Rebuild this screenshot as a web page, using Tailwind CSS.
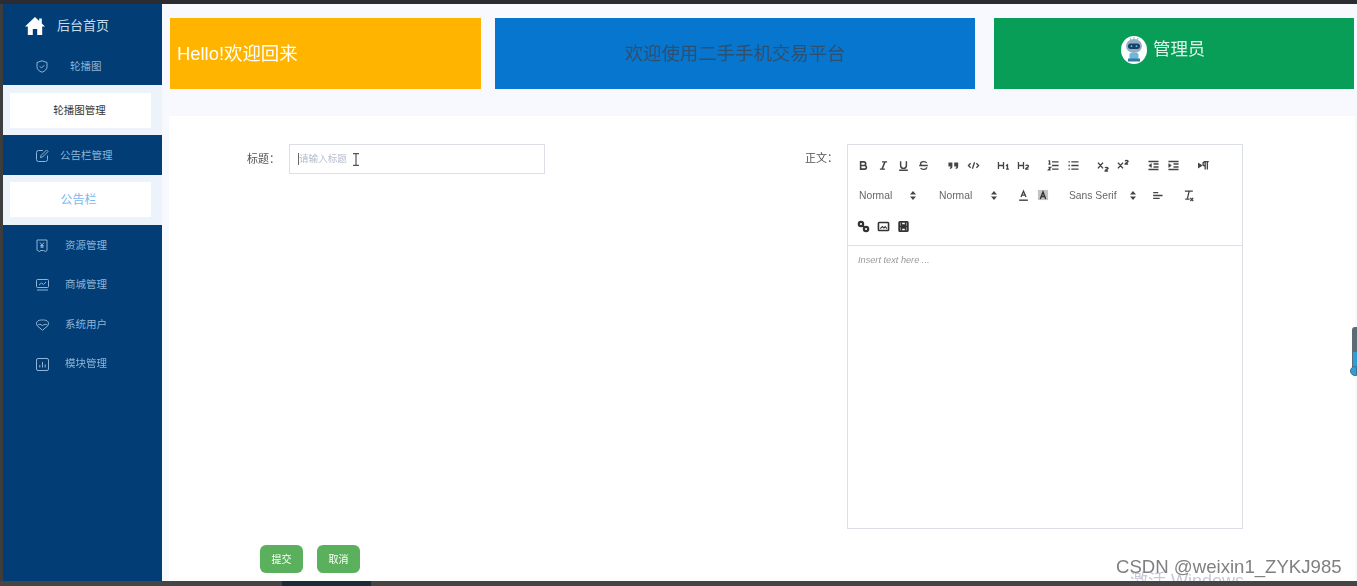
<!DOCTYPE html>
<html lang="zh-CN">
<head>
  <meta charset="UTF-8" />
  <title>公告栏</title>
  <script src="https://cdn.jsdelivr.net/npm/@tailwindcss/browser@4"></script>
</head>
<body class="relative h-screen overflow-hidden bg-[#f8f9ff] blur-[0.35px] font-['Liberation_Sans','Noto_Sans_CJK_SC',sans-serif]">
  <div class="h-[4px] bg-[#2b2c31]"></div>

  <div class="flex h-[577px]">
    <div class="w-[3px] bg-[#3d3d3d]"></div>

    <!-- sidebar -->
    <aside class="w-[159px] bg-[#023d75] text-[#8fb4d6] text-[10.5px]">
      <div class="h-[42px] flex items-center pl-[22px] pt-[2px] gap-[12px] text-[13px] text-[#c5dcec]">
        <svg class="w-[20px] h-[20px]" viewBox="0 0 20 20" fill="#fff"><path d="M10 1 0 10.500h2.800V19h5V13h4.400v6h5v-8.500H20L16.800 7.400V2.500h-2.600v2.400z"/></svg>
        <span>后台首页</span>
      </div>
      <div class="h-[39px] flex items-center pl-[33px] pt-[2px]">
        <svg class="w-[12px] h-[13px]" viewBox="0 0 12 13" fill="none" stroke="#8fb4d6"><path d="M6 .8 11 2.500v4.200c0 2.800-2.200 4.600-5 5.500-2.800-.9-5-2.700-5-5.500V2.500z"/><path d="M3.800 6.300 5.500 8l2.800-2.800"/></svg>
        <span class="ml-[22px]">轮播图</span>
      </div>
      <div class="h-[50px] bg-[#edf3fb] pl-[7px] pr-[11px] pt-[8px]">
        <div class="w-full h-[35px] bg-white text-[#333] flex items-center justify-center pr-[2px]">轮播图管理</div>
      </div>
      <div class="h-[40px] flex items-center pl-[33px] pt-[1px]">
        <svg class="w-[13px] h-[13px]" viewBox="0 0 13 13" fill="none" stroke="#8fb4d6"><path d="M7 1.500H2.500a2 2 0 0 0-2 2v7a2 2 0 0 0 2 2h7a2 2 0 0 0 2-2V6.500"/><path d="M4.500 8.500 5 6.500 10.500 1l1.500 1.500L6.500 8z"/></svg>
        <span class="ml-[11px]">公告栏管理</span>
      </div>
      <div class="h-[50px] bg-[#edf3fb] pl-[7px] pr-[11px] pt-[7px]">
        <div class="w-full h-[35px] bg-white text-[#7ab8f0] text-[12px] flex items-center justify-center pr-[4px]">公告栏</div>
      </div>
      <div class="h-[40px] flex items-center pl-[33px] pt-[1px]">
        <svg class="w-[12px] h-[13px]" viewBox="0 0 12 13" fill="none" stroke="#8fb4d6"><path d="M1 1h10v10.500l-1.700 1-1.700-1-2.600 0-1.700 1-1.700-1-.6-.2z"/><path d="M4 3.500 6 6l2-2.500M6 6v3M4.300 6.500h3.400M4.300 8h3.400"/></svg>
        <span class="ml-[17px]">资源管理</span>
      </div>
      <div class="h-[39.500px] flex items-center pl-[33px] pt-[1px]">
        <svg class="w-[13px] h-[12px]" viewBox="0 0 13 12" fill="none" stroke="#8fb4d6"><rect x=".5" y=".5" width="12" height="8" rx="1"/><path d="M1 11h11M3 6l2.500-2 2 1.500L10 3"/></svg>
        <span class="ml-[16px]">商城管理</span>
      </div>
      <div class="h-[39.500px] flex items-center pl-[33px] pt-[1px]">
        <svg class="w-[13px] h-[12px]" viewBox="0 0 13 12" fill="none" stroke="#8fb4d6"><path d="M6.500 11.300 1 6.500C.1 5.400.3 2.800 2 1.800 3.500 1 5.200 1 6.500 1s3 0 4.500.8c1.700 1 1.900 3.600 1 4.700z"/><path d="M1.500 6c1.500-1 3-.8 5 .5 2-1.300 3.500-1.500 5-.5"/></svg>
        <span class="ml-[16px]">系统用户</span>
      </div>
      <div class="h-[39.500px] flex items-center pl-[33px] pt-[1px]">
        <svg class="w-[13px] h-[13px]" viewBox="0 0 13 13" fill="none" stroke="#8fb4d6"><rect x=".5" y=".5" width="12" height="12" rx="1.500"/><path d="M3.800 9.500V7M6.500 9.500V4M9.200 9.500V6.500"/></svg>
        <span class="ml-[16px]">模块管理</span>
      </div>
    </aside>

    <main class="flex-1 flex flex-col min-w-0">
      <!-- top cards -->
      <div class="h-[112px] pt-[14px] pl-[8px] flex">
        <div class="w-[311px] h-[71px] bg-[#ffb500] text-white text-[18.4px] flex items-center pl-[7px]">Hello!欢迎回来</div>
        <div class="w-[480px] h-[71px] ml-[14px] bg-[#0776ce] text-[#2f4f6f] text-[18.4px] flex items-center justify-center">欢迎使用二手手机交易平台</div>
        <div class="w-[360px] h-[71px] ml-[19px] bg-[#089e58] text-[#e2f5ea] text-[17.4px] flex items-center pl-[127px] pb-[8px] gap-[6px]">
          <svg class="w-[26px] h-[28px]" viewBox="0 0 26 28">
            <ellipse cx="13" cy="14" rx="13" ry="14" fill="#fff"/>
            <ellipse cx="13" cy="10" rx="8" ry="7" fill="#8fb0c4"/>
            <rect x="7" y="7.500" width="12" height="5.500" rx="2.700" fill="#1c3f66"/>
            <circle cx="10.500" cy="10.200" r=".9" fill="#5cc6e8"/><circle cx="15.500" cy="10.200" r=".9" fill="#5cc6e8"/>
            <path d="M13 1v2M9 2l1 2M17 2l-1 2" stroke="#8fb0c4" fill="none"/>
            <rect x="8.500" y="17" width="9" height="6" rx="1.500" fill="#6fb6d8"/>
            <rect x="7" y="22.500" width="12" height="3" fill="#2f7ba6"/>
          </svg>
          <span>管理员</span>
        </div>
      </div>

      <!-- form -->
      <div class="flex-1 ml-[7px] mr-[2px] bg-white pt-[28px] pl-[78px] pr-[112px]">
        <div class="flex items-start">
          <label class="w-[42px] pt-[7px] text-[11px] text-[#555]">标题：</label>
          <div class="relative w-[256px] h-[30px] border border-[#dcdfe6] flex items-center pl-[8px] text-[9.6px] text-[#b4bccc]">
            <span class="w-px h-[12px] bg-[#666]"></span>请输入标题
            <svg class="absolute left-[62px] top-[8px] w-[8px] h-[13px]" viewBox="0 0 8 13" fill="none" stroke="#555" stroke-width="1.200"><path d="M1 .7h6M1 12.300h6M4 .7v11.600"/></svg>
          </div>
          <label class="ml-auto w-[42px] pt-[6px] text-[11px] text-[#555]">正文：</label>
          <div class="w-[396px] h-[385px] border border-[#dcdfe6]">
            <div class="h-[101px] border-b border-[#dcdfe6] pl-[5px] pt-[10px] text-[#444]">
              <div class="flex items-center h-[20px]">
                <button class="w-[20px] h-[20px] flex items-center justify-center"><svg class="w-[13px] h-[13px]" viewBox="0 0 18 18" fill="none" stroke="#444" stroke-width="2.200"><path d="M5 4h4.500a2.500 2.500 0 0 1 0 5H5zM5 9h5.500a2.500 2.500 0 0 1 0 5H5z"/></svg></button>
                <button class="w-[20px] h-[20px] flex items-center justify-center"><svg class="w-[13px] h-[13px]" viewBox="0 0 18 18" fill="none" stroke="#444" stroke-width="2"><path d="M7 4h7M4 14h7M11 4l-4 10"/></svg></button>
                <button class="w-[20px] h-[20px] flex items-center justify-center"><svg class="w-[13px] h-[13px]" viewBox="0 0 18 18" fill="none" stroke="#444" stroke-width="2"><path d="M5 3v6a4 4 0 0 0 8 0V3M3 15.500h12"/></svg></button>
                <button class="w-[20px] h-[20px] flex items-center justify-center"><svg class="w-[13px] h-[13px]" viewBox="0 0 18 18" fill="none" stroke="#444" stroke-width="1.800"><path d="M3 9h12M13.500 5.500C12 3 5 3 5 6.500c0 1 .7 2 2 2.500M5 12.500C6.500 15 13.500 15 13.500 11.500"/></svg></button>
                <button class="ml-[10px] w-[20px] h-[20px] flex items-center justify-center"><svg class="w-[13px] h-[13px]" viewBox="0 0 18 18" fill="#444"><path d="M2 5h5.500v5.500c0 2-1.500 3.500-3.500 3.500v-2c.7 0 1.200-.7 1.200-1.500H2zM10 5h5.500v5.500c0 2-1.500 3.500-3.500 3.500v-2c.7 0 1.200-.7 1.200-1.500H10z"/></svg></button>
                <button class="w-[20px] h-[20px] flex items-center justify-center"><svg class="w-[13px] h-[13px]" viewBox="0 0 18 18" fill="none" stroke="#444" stroke-width="1.800"><path d="M5 6 2 9l3 3M13 6l3 3-3 3M10.500 4.500 7.500 13.500"/></svg></button>
                <button class="ml-[10px] w-[20px] h-[20px] flex items-center justify-center"><svg class="w-[13px] h-[13px]" viewBox="0 0 18 18" fill="none" stroke="#444" stroke-width="1.800"><path d="M2 4v10M9 4v10M2 9h7M12.500 9.500 14.500 8v6M12.500 14h4"/></svg></button>
                <button class="w-[20px] h-[20px] flex items-center justify-center"><svg class="w-[13px] h-[13px]" viewBox="0 0 18 18" fill="none" stroke="#444" stroke-width="1.800"><path d="M2 4v10M9 4v10M2 9h7M12 9.500c.5-1.500 4-1.500 4 .5 0 1.500-4 2.500-4 4h4"/></svg></button>
                <button class="ml-[10px] w-[20px] h-[20px] flex items-center justify-center"><svg class="w-[13px] h-[13px]" viewBox="0 0 18 18" fill="none" stroke="#444" stroke-width="1.800"><path d="M7 4h9M7 9h9M7 14h9M2 2.500h1.500v4M2 7h3M2 11.500h3l-3 3.500h3"/></svg></button>
                <button class="w-[20px] h-[20px] flex items-center justify-center"><svg class="w-[13px] h-[13px]" viewBox="0 0 18 18" fill="none" stroke="#444" stroke-width="2"><path d="M6 4h10M6 9h10M6 14h10M2 4h2M2 9h2M2 14h2"/></svg></button>
                <button class="ml-[10px] w-[20px] h-[20px] flex items-center justify-center"><svg class="w-[14px] h-[13px]" viewBox="0 0 18 18" fill="none" stroke="#444" stroke-width="2"><path d="m2 5 7 8M9 5l-7 8M12 12.500c.5-1.200 4-1.200 4 .5 0 1.300-4 1.700-4 3.500h4"/></svg></button>
                <button class="w-[20px] h-[20px] flex items-center justify-center"><svg class="w-[14px] h-[13px]" viewBox="0 0 18 18" fill="none" stroke="#444" stroke-width="2"><path d="m2 5 7 8M9 5l-7 8M12 3c.5-1.200 4-1.200 4 .5 0 1.300-4 1.700-4 3.500h4"/></svg></button>
                <button class="ml-[10px] w-[20px] h-[20px] flex items-center justify-center"><svg class="w-[13px] h-[13px]" viewBox="0 0 18 18" fill="none" stroke="#444" stroke-width="2"><path d="M2 3.500h14M9 7h7M9 11h7M2 14.500h14"/><path d="M6 6.500 2.500 9 6 11.500z" fill="#444" stroke-width="1"/></svg></button>
                <button class="w-[20px] h-[20px] flex items-center justify-center"><svg class="w-[13px] h-[13px]" viewBox="0 0 18 18" fill="none" stroke="#444" stroke-width="2"><path d="M2 3.500h14M9 7h7M9 11h7M2 14.500h14"/><path d="M2.500 6.500 6 9l-3.500 2.500z" fill="#444" stroke-width="1"/></svg></button>
                <button class="ml-[10px] w-[20px] h-[20px] flex items-center justify-center"><svg class="w-[14px] h-[13px]" viewBox="0 0 18 18" fill="none" stroke="#444" stroke-width="1.800"><path d="M11 3.500h6M12 3.500v11M15 3.500v11M12 3.500a3 3 0 0 0 0 6"/><path d="M3 6.500 7 9l-4 2.500z" fill="#444"/></svg></button>
              </div>
              <div class="flex items-center h-[20px] mt-[10px] text-[10.3px] text-[#666]">
                <span class="ml-[6px] w-[57px] flex items-center justify-between"><span class="pt-[1px]">Normal</span><svg class="w-[6px] h-[9px]" viewBox="0 0 6 9" fill="#444"><path d="M3 0 6 3.500H0zM3 9 0 5.500h6z"/></svg></span>
                <span class="ml-[23px] w-[58px] flex items-center justify-between"><span class="pt-[1px]">Normal</span><svg class="w-[6px] h-[9px]" viewBox="0 0 6 9" fill="#444"><path d="M3 0 6 3.500H0zM3 9 0 5.500h6z"/></svg></span>
                <button class="ml-[16px] w-[20px] h-[20px] flex items-center justify-center"><svg class="w-[13px] h-[13px]" viewBox="0 0 18 18" fill="none" stroke="#444" stroke-width="1.800"><path d="m5.500 11 3.500-8 3.500 8M6.500 8.500h5"/><path d="M3 15.500h12" stroke-width="2"/></svg></button>
                <button class="w-[20px] h-[20px] flex items-center justify-center"><svg class="w-[14px] h-[14px]" viewBox="0 0 18 18" fill="none" stroke="#333" stroke-width="1.800"><rect x="2.500" y="2.500" width="13" height="13" fill="#c4c4c4" stroke="none"/><path d="m5.500 14 3.500-9 3.500 9M6.500 11h5"/></svg></button>
                <span class="ml-[16px] w-[70px] flex items-center justify-between"><span class="pt-[1px]">Sans Serif</span><svg class="w-[6px] h-[9px] mr-[3px]" viewBox="0 0 6 9" fill="#444"><path d="M3 0 6 3.500H0zM3 9 0 5.500h6z"/></svg></span>
                <button class="ml-[8px] w-[20px] h-[20px] flex items-center justify-center"><svg class="w-[13px] h-[13px]" viewBox="0 0 18 18" fill="none" stroke="#444" stroke-width="1.800"><path d="M3 5h7M3 9h13M3 13h9"/></svg></button>
                <button class="ml-[11px] w-[20px] h-[20px] flex items-center justify-center"><svg class="w-[13px] h-[13px]" viewBox="0 0 18 18" fill="none" stroke="#444" stroke-width="1.800"><path d="M4 3h11M10 3 7.500 13M4.500 14h6M11.500 12.500l4 4M15.500 12.500l-4 4"/></svg></button>
              </div>
              <div class="flex items-center h-[20px] mt-[11px]">
                <button class="w-[20px] h-[20px] flex items-center justify-center"><svg class="w-[13px] h-[13px]" viewBox="0 0 18 18" fill="none" stroke="#333" stroke-width="3"><circle cx="5.500" cy="5.500" r="3"/><circle cx="12.500" cy="12.500" r="3"/><path d="M7 7l4 4"/></svg></button>
                <button class="w-[20px] h-[20px] flex items-center justify-center"><svg class="w-[13px] h-[13px]" viewBox="0 0 18 18" fill="none" stroke="#333" stroke-width="2.200"><rect x="2" y="3.500" width="14" height="11" rx="1"/><path d="m4.500 12 3-3 2 2 2-2 2 3" stroke-width="1.500"/></svg></button>
                <button class="w-[20px] h-[20px] flex items-center justify-center"><svg class="w-[13px] h-[13px]" viewBox="0 0 18 18" fill="none" stroke="#333" stroke-width="2.400"><rect x="3" y="2.500" width="12" height="13" rx="1"/><path d="M6 3v4h6V3M6 15v-4h6v4M3 9h12"/></svg></button>
              </div>
            </div>
            <p class="pt-[8px] pl-[10px] text-[9.2px] italic text-[#999]">Insert text here ...</p>
          </div>
        </div>
        <div class="flex gap-[14px] mt-[16px] pl-[13px] text-[10px] text-white">
          <button class="w-[43px] h-[28px] rounded-[6px] bg-[#5bb05d]">提交</button>
          <button class="w-[43px] h-[28px] rounded-[6px] bg-[#5bb05d]">取消</button>
        </div>
      </div>
    </main>
  </div>

  <div class="flex h-[5px] bg-[#454545] relative z-10">
    <div class="ml-[282px] w-[89px] bg-[#1f2a38]"></div>
  </div>

  <!-- overlays: scrollbar widget and watermarks -->
  <div class="absolute left-[1352px] top-[327px] w-[5px] h-[46px] rounded-tl-[3px] bg-[#5b6c77]">
    <div class="mt-[25px] ml-[1px] h-[21px] bg-[#2d9fd8]"></div>
  </div>
  <div class="absolute left-[1350px] top-[366px] w-[7px] h-[10px] rounded-l-full bg-[#2d9fd8] border border-[#46708a]"></div>
  <div class="absolute left-[1130px] top-[568px] text-[18px] text-[#c8c8da] whitespace-nowrap">激活 Windows</div>
  <div class="absolute left-[1116px] top-[556px] text-[18.6px] leading-[22px] text-[#808080] whitespace-nowrap">CSDN @weixin1_ZYKJ985</div>
</body>
</html>
